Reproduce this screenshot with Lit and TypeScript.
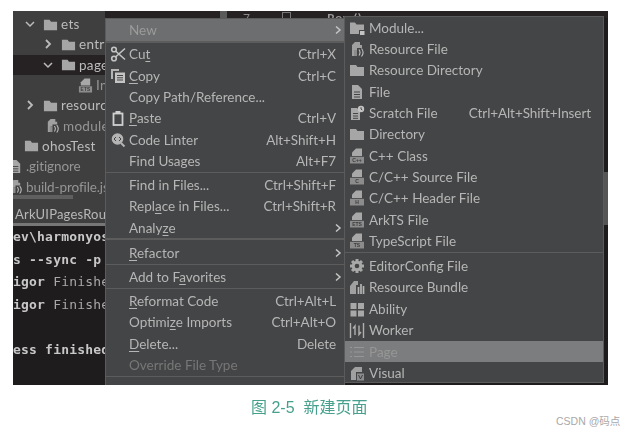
import { LitElement, html, css, svg } from "lit";
import { customElement } from "lit/decorators.js";

type Row = { t?: any; k?: string; i?: string; a?: boolean; h?: boolean; d?: boolean; sep?: boolean; g?: number };

const u = (a: string, b: string, c: string) => html`${a}<u>${b}</u>${c}`;

const MAIN: Row[] = [
  { t: "New", a: true, h: true },
  { sep: true, g: 2.5 },
  { t: u("Cu", "t", ""), k: "Ctrl+X", i: "cut" },
  { t: u("", "C", "opy"), k: "Ctrl+C", i: "copy" },
  { t: "Copy Path/Reference..." },
  { t: u("", "P", "aste"), k: "Ctrl+V", i: "paste" },
  { t: "Code Linter", k: "Alt+Shift+H", i: "linter" },
  { t: "Find Usages", k: "Alt+F7" },
  { sep: true, g: 2.6 },
  { t: "Find in Files...", k: "Ctrl+Shift+F" },
  { t: u("Repl", "a", "ce in Files..."), k: "Ctrl+Shift+R" },
  { t: u("Analy", "z", "e"), a: true },
  { sep: true, g: 4.4 },
  { t: u("", "R", "efactor"), a: true },
  { sep: true, g: 2.6 },
  { t: u("Add to F", "a", "vorites"), a: true },
  { sep: true, g: 2.6 },
  { t: u("", "R", "eformat Code"), k: "Ctrl+Alt+L" },
  { t: u("Optimi", "z", "e Imports"), k: "Ctrl+Alt+O" },
  { t: u("", "D", "elete..."), k: "Delete" },
  { t: "Override File Type", d: true },
  { sep: true, g: 2 },
];

const SUB: Row[] = [
  { t: "Module...", i: "module" },
  { t: "Resource File", i: "resfile" },
  { t: "Resource Directory", i: "folder" },
  { t: "File", i: "file" },
  { t: "Scratch File", k: "Ctrl+Alt+Shift+Insert", i: "scratch" },
  { t: "Directory", i: "folder" },
  { t: "C++ Class", i: "cpp" },
  { t: "C/C++ Source File", i: "csrc" },
  { t: "C/C++ Header File", i: "chdr" },
  { t: "ArkTS File", i: "ets" },
  { t: "TypeScript File", i: "ts" },
  { sep: true, g: 3.7 },
  { t: "EditorConfig File", i: "gear" },
  { t: "Resource Bundle", i: "bundle" },
  { t: "Ability", i: "ability" },
  { t: "Worker", i: "worker" },
  { t: "Page", i: "page", h: true },
  { t: "Visual", i: "visual" },
];

const sheet = (tag: string) => svg`
  <path d="M7 0.5h6V8H3V4.500z" fill="#a8a8a8"/>
  <rect x="1" y="8.800" width="14" height="6.700" fill="#8c8c8c"/>
  <text x="8" y="14" font-size="5" font-family="Liberation Sans, sans-serif" font-weight="700" text-anchor="middle" fill="#3c3c3c">${tag}</text>`;

const ICONS: Record<string, any> = {
  folder: svg`<path d="M1 3h6l1.500 2H15v9H1z" fill="#a6a6a6"/>`,
  module: svg`<path d="M1 2.500h5l1.500 2H15v5.500h-5v4H1z" fill="#a6a6a6"/><rect x="11" y="11" width="4.500" height="4" fill="#c4c4c4"/>`,
  resfile: svg`<path d="M6 1h5v3h2v3H8v2H6v6H3V4z" fill="#a0a0a0"/><path d="M5 9h3v6H5z" fill="#8c8c8c"/><path d="M10 8.500c1.300 1.800 1.300 4 0 6M12.500 7.500c2 2.500 2 5.500 0 8" stroke="#c0c0c0" fill="none" stroke-width="1.100"/>`,
  file: svg`<path d="M4 1h5l4 4v10H3V1z" fill="#a8a8a8"/><path d="M5 8h6M5 10.500h6M5 13h6" stroke="#444" stroke-width="1"/>`,
  scratch: svg`<path d="M2 3h6l3 3v9H2z" fill="#a8a8a8"/><path d="M4 8.500h5M4 11h5M4 13.300h5" stroke="#444"/><circle cx="12" cy="4" r="3.200" fill="#c4c4c4"/><path d="M12 2.300V4l1.300 1" stroke="#444" fill="none"/>`,
  cpp: sheet("C++"),
  csrc: sheet("C"),
  chdr: sheet("H"),
  ets: sheet("ETS"),
  ts: sheet("TS"),
  gear: svg`<g fill="#a8a8a8"><circle cx="8" cy="8" r="5.300"/><path d="M6.500 1h3v3h-3zM6.500 12h3v3h-3zM1 6.500h3v3H1zM12 6.500h3v3h-3z"/><path d="M6.500 1h3v3h-3zM6.500 12h3v3h-3zM1 6.500h3v3H1zM12 6.500h3v3h-3z" transform="rotate(45 8 8)"/></g><circle cx="8" cy="8" r="2.300" fill="#444"/>`,
  bundle: svg`<path d="M1 7l4-5h4v4H7v9H1z" fill="#a0a0a0"/><path d="M9.500 8v7M12 5v10M14.500 7v8" stroke="#b4b4b4" stroke-width="1.700"/>`,
  ability: svg`<rect x="1.500" y="2" width="6" height="6" fill="#a8a8a8"/><rect x="9" y="2" width="6" height="6" fill="#a8a8a8"/><rect x="1.500" y="9.500" width="6" height="6" fill="#a8a8a8"/><rect x="9" y="9.500" width="6" height="6" fill="#a8a8a8"/>`,
  worker: svg`<path d="M1.500 1v15M14.500 1v15" stroke="#b0b0b0" stroke-width="1.400"/><path d="M6 13V4L4 6.500M10 3.500v9l2-2.500" stroke="#b0b0b0" stroke-width="1.400" fill="none"/>`,
  page: svg`<path d="M5 3.500h10M5 8h10M5 12.500h10M1 3.500h2M1 8h2M1 12.500h2" stroke="#979797" stroke-width="1.200"/>`,
  visual: svg`<path d="M2 6l4-4h7v5H7v8H2z" fill="#a0a0a0"/><rect x="8" y="8.500" width="7" height="7" fill="#8c8c8c"/><path d="M9.500 10l2 4 2-4" stroke="#3c3c3c" fill="none"/>`,
  cut: svg`<circle cx="4" cy="12.500" r="2.300" fill="none" stroke="#c4c4c4" stroke-width="1.600"/><circle cx="4" cy="3.500" r="2.300" fill="none" stroke="#c4c4c4" stroke-width="1.600"/><path d="M5.500 5L15 13.500M5.500 11L15 2.500" stroke="#c4c4c4" stroke-width="1.600"/>`,
  copy: svg`<path d="M1 1h8v2H3v8H1z" fill="#b4b4b4"/><rect x="5" y="4.500" width="10" height="10.500" fill="#c4c4c4"/><path d="M7 7.500h6M7 9.800h6M7 12h6" stroke="#444"/>`,
  paste: svg`<rect x="3.500" y="3.500" width="9" height="11.500" fill="none" stroke="#d0d0d0" stroke-width="1.800"/><rect x="5.500" y="1" width="5" height="3" fill="#d0d0d0"/>`,
  linter: svg`<circle cx="7.500" cy="7" r="5.800" fill="#b4b4b4"/><path d="M6 5L4 7l2 2M9 5l2 2-2 2" stroke="#444" fill="none"/><path d="M11 11l3.500 3.500" stroke="#b4b4b4" stroke-width="2"/>`,
};
const ic = (n: string, size = 16) =>
  html`<svg class="icon" width=${size} height=${size} viewBox="0 0 16 16">${ICONS[n]}</svg>`;

const chevDown = html`<svg class="chev" width="12" height="12" viewBox="0 0 12 12"><path d="M2 4l4 4 4-4" fill="none" stroke="#bbb" stroke-width="1.500"/></svg>`;
const chevRight = html`<svg class="chev" width="12" height="12" viewBox="0 0 12 12"><path d="M4 2l4 4-4 4" fill="none" stroke="#bbb" stroke-width="1.800"/></svg>`;

const TREE: { c: string; l: any; sel?: boolean }[] = [
  { c: "d1", l: html`${chevDown}${ic("folder", 15)}<span class="bright">ets</span>` },
  { c: "d2", l: html`${chevRight}${ic("folder", 15)}<span class="bright">entry</span>` },
  { c: "d2", sel: true, l: html`${chevDown}${ic("folder", 15)}<span class="bright">pages</span>` },
  { c: "d3", l: html`${ic("ets", 15)}<span>Index</span>` },
  { c: "d1", l: html`${chevRight}${ic("folder", 15)}<span class="bright">resources</span>` },
  { c: "d2b", l: html`${ic("resfile", 15)}<span>module.json5</span>` },
  { c: "d0", l: html`${ic("folder", 15)}<span class="bright">ohosTest</span>` },
  { c: "dm", l: html`${ic("file", 15)}<span>.gitignore</span>` },
  { c: "dm", l: html`${ic("resfile", 15)}<span>build-profile.json5</span>` },
];

@customElement("app-root")
export class AppRoot extends LitElement {
  static styles = css`
    :host { display: block; width: 627px; height: 432px; background: #fff; overflow: hidden; position: relative; }
    .shot { position: relative; margin: 11px 0 0 13px; width: 595px; height: 374px; background: #1f1c1d; overflow: hidden; filter: blur(0.45px); font-family: Lato, "Open Sans", sans-serif; }
    .left { width: 92px; height: 100%; display: flex; flex-direction: column; }
    .tree { height: 191px; background: #3f3f40; padding-top: 3px; box-sizing: border-box; overflow: hidden; white-space: nowrap; }
    .t { height: 20.300px; display: flex; align-items: center; font-size: 13.500px; color: #959595; letter-spacing: .3px; }
    .t.sel { background: #262223; }
    .t .icon { flex: none; margin-right: 3px; }
    .chev { flex: none; margin-right: 7px; }
    .bright { color: #bcbcbc; }
    .d1 { padding-left: 11px; }
    .d2 { padding-left: 29px; }
    .d3 { padding-left: 65px; }
    .d2b { padding-left: 32px; }
    .d0 { padding-left: 11px; }
    .dm { margin-left: -5px; letter-spacing: -.1px; }
    .scrollbar { width: 60px; height: 4px; background: #5f5f5f; margin-top: -7px; }
    .tabs { height: 24px; flex: none; background: #3f3f40; color: #b8b8b8; font-size: 13px; display: flex; align-items: center; padding-top: 3px; box-sizing: border-box; border-bottom: 3px solid #777; white-space: nowrap; overflow: hidden; letter-spacing: .2px; margin-top: 3px; padding-left: 2px; }
    .term { flex: 1; background: #1f1c1d; color: #c8c8c8; font-family: "DejaVu Sans Mono", monospace; font-size: 13px; font-weight: 700; letter-spacing: .2px; overflow: hidden; }
    .term div { height: 22.700px; line-height: 22.700px; white-space: pre; }
    .term i { font-style: normal; font-weight: 400; color: #a8a8a8; }
    .strip { position: absolute; left: 92px; top: 0; right: 0; height: 7px; overflow: hidden; background: #262223; color: #8a8a8a; font-size: 12px; }
    .strip span { position: absolute; top: 1px; line-height: 12px; }
    .strip .gut { position: absolute; left: 115px; top: 0; width: 7px; height: 7px; background: #5a5a5a; }
    .strip .n1 { left: 138px; }
    .strip .n2 { position: absolute; left: 177px; top: 1px; width: 9px; height: 8px; border: 1px solid #777; box-sizing: border-box; }
    .strip .n3 { left: 222px; font-weight: 700; color: #999; letter-spacing: 1px; }
    .right { position: absolute; right: 0; top: 161px; width: 4px; height: 53px; background: #555; }
    .menu { position: absolute; background: #444546; box-sizing: border-box; border: 1px solid #5b5b5b; display: flex; flex-direction: column; color: #b6b6b6; font-size: 13.500px; }
    .main { left: 92px; top: 7px; width: 240px; height: 380px; }
    .sub { left: 331px; top: 5px; width: 260px; height: 367px; }
    .row { height: 21.350px; display: flex; align-items: center; white-space: nowrap; position: relative; flex: none; }
    .main .row { padding-left: 23px; padding-right: 8px; }
    .sub .row { padding-left: 24px; padding-right: 12px; }
    .row .ico { position: absolute; left: 4px; top: 50%; transform: translateY(-50%); height: 16px; display: flex; }
    .row .key { margin-left: auto; letter-spacing: -.08px; }
    .row .arr { margin-left: auto; margin-right: -6px; width: 8px; height: 8px; display: flex; }
    .main .row.h { height: 22px; background: #6d6e6f; color: #9b9b9b; }
    .sub .row.h { background: #7c7d7e; color: #969696; }
    .row.d { color: #777; }
    .sep { flex: none; height: 1.500px; background: #5c5c5c; }
    u { text-underline-offset: 2px; text-decoration-thickness: 1px; }
    .caption { position: absolute; left: 251px; top: 398px; font-family: "Liberation Sans", "Noto Sans CJK SC", sans-serif; font-size: 16px; line-height: 20px; color: #46a08d; white-space: pre; filter: blur(0.3px); }
    .mark { position: absolute; left: 556px; top: 413px; font-family: "Liberation Sans", "Noto Sans CJK SC", sans-serif; font-size: 10.500px; line-height: 16px; color: #a9a9a9; white-space: pre; }
  `;

  private row(r: Row) {
    if (r.sep) return html`<div class="sep" style="margin-bottom:${(r.g ?? 2) - 1.5}px"></div>`;
    return html`<div class="row ${r.h ? "h" : ""} ${r.d ? "d" : ""}">
      ${r.i ? html`<span class="ico">${ic(r.i)}</span>` : ""}
      <span>${r.t}</span>
      ${r.k ? html`<span class="key">${r.k}</span>` : ""}
      ${r.a ? html`<span class="arr"><svg width="8" height="8" viewBox="0 0 8 8"><path d="M2 .5L6 4 2 7.500" fill="none" stroke="#c4c4c4" stroke-width="1.500"/></svg></span>` : ""}
    </div>`;
  }

  render() {
    return html`
      <div class="shot">
        <div class="left">
          <div class="tree">
            ${TREE.map((t) => html`<div class="t ${t.c} ${t.sel ? "sel" : ""}">${t.l}</div>`)}
          </div>
          <div class="scrollbar"></div>
          <div class="tabs">ArkUIPagesRouter</div>
          <div class="term">
            <div>ev\\harmonyos</div>
            <div>s --sync -p</div>
            <div>igor <i>Finished</i></div>
            <div>igor <i>Finished</i></div>
            <div> </div>
            <div>ess finished</div>
          </div>
        </div>
        <div class="strip">
          <b class="gut"></b><span class="n1">7</span><b class="n2"></b>
          <span class="n3">Row()</span>
        </div>
        <div class="right"></div>
        <div class="menu main">${MAIN.map((r) => this.row(r))}</div>
        <div class="menu sub">${SUB.map((r) => this.row(r))}</div>
      </div>
      <div class="caption">图 2-5  新建页面</div>
      <div class="mark">CSDN @码点</div>
    `;
  }
}
